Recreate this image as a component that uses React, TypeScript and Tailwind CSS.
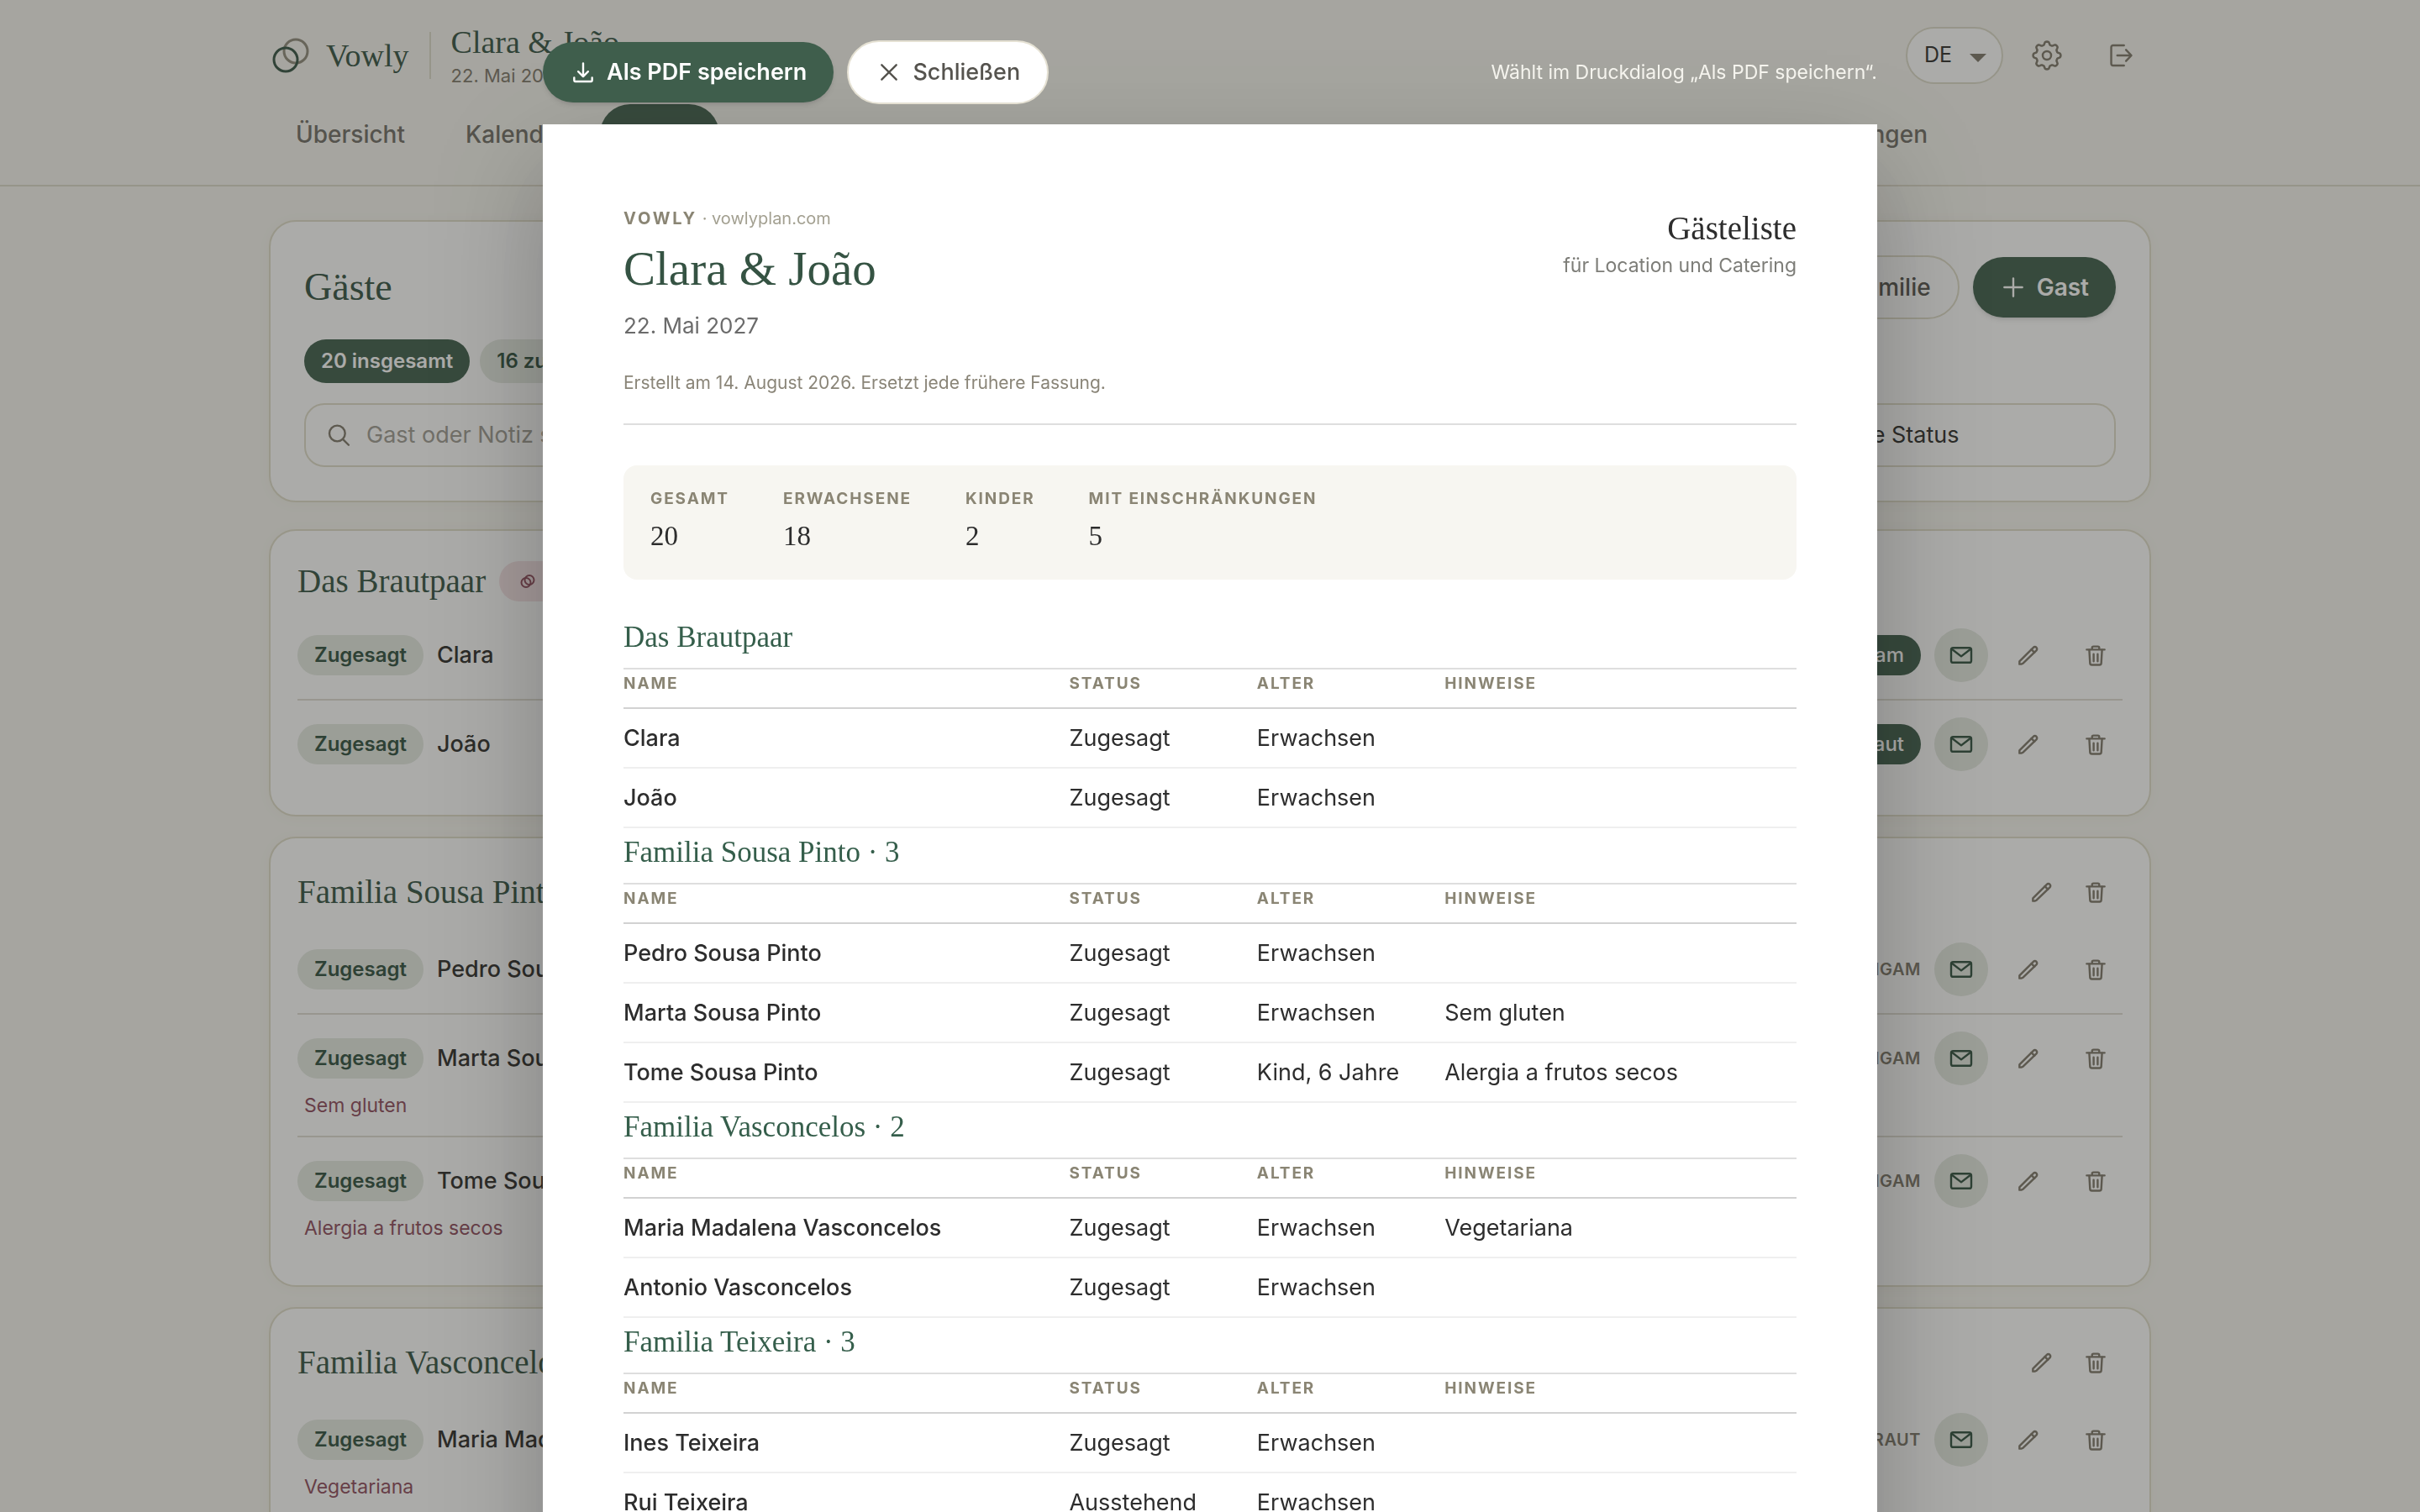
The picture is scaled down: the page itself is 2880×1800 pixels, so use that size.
import type { ReactNode } from 'react'

const serif = "font-['Liberation_Serif',serif]"

interface Guest {
  name: string;
  status: string;
  age: string;
  notes?: string;
}

interface Group {
  title: string;
  guests: Guest[];
}

const groups: Group[] = [
  {
    title: 'Das Brautpaar',
    guests: [
      { name: 'Clara', status: 'Zugesagt', age: 'Erwachsen' },
      { name: 'João', status: 'Zugesagt', age: 'Erwachsen' },
    ],
  },
  {
    title: 'Familia Sousa Pinto · 3',
    guests: [
      { name: 'Pedro Sousa Pinto', status: 'Zugesagt', age: 'Erwachsen' },
      { name: 'Marta Sousa Pinto', status: 'Zugesagt', age: 'Erwachsen', notes: 'Sem gluten' },
      { name: 'Tome Sousa Pinto', status: 'Zugesagt', age: 'Kind, 6 Jahre', notes: 'Alergia a frutos secos' },
    ],
  },
  {
    title: 'Familia Vasconcelos · 2',
    guests: [
      { name: 'Maria Madalena Vasconcelos', status: 'Zugesagt', age: 'Erwachsen', notes: 'Vegetariana' },
      { name: 'Antonio Vasconcelos', status: 'Zugesagt', age: 'Erwachsen' },
    ],
  },
  {
    title: 'Familia Teixeira · 3',
    guests: [
      { name: 'Ines Teixeira', status: 'Zugesagt', age: 'Erwachsen' },
      { name: 'Rui Teixeira', status: 'Ausstehend', age: 'Erwachsen' },
    ],
  },
]

const totals = [
  { label: 'Gesamt', value: 20 },
  { label: 'Erwachsene', value: 18 },
  { label: 'Kinder', value: 2 },
  { label: 'Mit Einschränkungen', value: 5 },
]

// Outline of the cog: eight soft teeth round a circle
const cogPath =
  Array.from({ length: 96 }, (_, i) => {
    const a = (i / 96) * Math.PI * 2
    const r = 14.6 + 1.9 * Math.tanh(1.8 * Math.cos(8 * a))
    return `${i ? 'L' : 'M'}${(20 + r * Math.sin(a)).toFixed(2)} ${(20 - r * Math.cos(a)).toFixed(2)}`
  }).join('') + 'Z'

function Icon({ children }: { children: ReactNode }) {
  return (
    <svg viewBox="0 0 24 24" className="size-8 shrink-0" fill="none" stroke="currentColor" strokeWidth="1.8" strokeLinecap="round" strokeLinejoin="round" aria-hidden="true">
      {children}
    </svg>
  )
}

function MailIcon() {
  return (
    <Icon>
      <rect x="3" y="5.4" width="18" height="13.2" rx="1.8" />
      <path d="M3.4 6.4 12 13l8.600-6.600" />
    </Icon>
  )
}

function PencilIcon() {
  return (
    <Icon>
      <path d="M4 20v-2.400L16.400 5.100a1.900 1.900 0 0 1 2.700 0 1.900 1.900 0 0 1 0 2.700L7.200 19.300 5.600 20z" />
      <path d="m14.700 6.900 2.700 2.700" />
    </Icon>
  )
}

function TrashIcon() {
  return (
    <Icon>
      <path d="M4 7h16M8.800 6.800V5.400a1.200 1.200 0 0 1 1.200-1.200h4a1.200 1.200 0 0 1 1.200 1.200v1.400" />
      <path d="m6.300 7.200.7 12a1.500 1.500 0 0 0 1.500 1.400h7a1.500 1.500 0 0 0 1.500-1.400l.7-12" />
      <path d="M10.200 11v6.400M13.800 11v6.400" />
    </Icon>
  )
}

function LogoutIcon() {
  return (
    <Icon>
      <path d="M14.800 3H5a1.600 1.600 0 0 0-1.600 1.600v14.800A1.600 1.600 0 0 0 5 21h9.800" />
      <path d="M8.800 12h12.400M16.600 7l4.800 5-4.800 5" />
    </Icon>
  )
}

function CogIcon() {
  return (
    <svg viewBox="0 0 40 40" className="size-10" fill="none" stroke="currentColor" strokeWidth="2.500" strokeLinejoin="round" aria-hidden="true">
      <path d={cogPath} />
      <circle cx="20" cy="20" r="5" />
    </svg>
  )
}

function SearchIcon() {
  return (
    <Icon>
      <circle cx="10" cy="10.500" r="7" />
      <path d="m15.200 15.800 5 5" />
    </Icon>
  )
}

function IconButton({ label, children, round }: { label: string; children: ReactNode; round?: boolean }) {
  return (
    <button
      aria-label={label}
      className={
        round
          ? 'flex size-16 items-center justify-center rounded-full bg-[#e4e9e1] text-[#2f4f3e]'
          : 'flex size-16 items-center justify-center rounded-full text-[#7d776a]'
      }
    >
      {children}
    </button>
  )
}

function Header() {
  return (
    <header className="border-b-2 border-[#dddaca]">
      <div className="mx-auto flex max-w-[2240px] flex-col gap-6 pt-8 pb-6">
        <div className="flex h-17 items-center gap-6">
          <a href="#" className="flex items-center gap-5">
            <svg viewBox="0 0 48 48" className="size-12" fill="none" strokeWidth="3" aria-hidden="true">
              <circle cx="32" cy="19" r="14" stroke="#8f8b7c" />
              <circle cx="20" cy="29" r="14" stroke="#355343" />
            </svg>
            <span className={`${serif} text-[38px] leading-10 text-[#355343]`}>Vowly</span>
          </a>
          <div className="h-14 w-0.5 bg-[#dddaca]" />
          <div className="pt-1">
            <p className={`${serif} text-[38px] leading-10 text-[#355343]`}>Clara &amp; João</p>
            <p className="mt-1 text-[22px] leading-8 text-[#7d776a]">22. Mai 2027</p>
          </div>
          <div className="ml-auto flex items-center gap-4">
            <div className="relative">
              <select aria-label="Sprache" className="h-17 w-[116px] appearance-none rounded-full border-2 border-[#dddaca] bg-white pl-5 text-[25px] text-[#2d2c2a]">
                <option>DE</option>
              </select>
              <svg viewBox="0 0 20 10" className="pointer-events-none absolute top-8 right-5 h-2.5 w-5 fill-[#7d776a]" aria-hidden="true">
                <path d="M0 0h20L10 10z" />
              </svg>
            </div>
            <button aria-label="Einstellungen" className="flex size-18 items-center justify-center text-[#7d776a]"><CogIcon /></button>
            <button aria-label="Abmelden" className="flex size-18 items-center justify-center text-[#7d776a]"><LogoutIcon /></button>
          </div>
        </div>
        <nav className="flex gap-2 pr-[234px] text-[28px] font-medium text-[#706d66]">
          <a href="#" className="flex h-18 items-center rounded-full px-8">Übersicht</a>
          <a href="#" className="flex h-18 items-center rounded-full px-8">Kalender</a>
          <a href="#" aria-current="page" className="flex h-18 items-center rounded-full bg-[#3f5e4c] px-8 text-white">Gäste</a>
          <a href="#" className="ml-auto flex h-18 items-center rounded-full px-8">Einstellungen</a>
        </nav>
      </div>
    </header>
  )
}

function Overview() {
  return (
    <section className="rounded-[32px] border-2 border-[#e0ddca] bg-white p-10 shadow-[0_2px_16px_rgba(90,85,50,0.04)]">
      <div className="flex h-[76px] items-center gap-4">
        <h1 className={`${serif} mr-auto text-[46px] leading-14 text-[#355343]`}>Gäste</h1>
        <button className="flex h-[76px] items-center gap-3 rounded-full border-2 border-[#e0ddca] bg-white px-8 text-[28px] font-medium text-[#55534e]">
          <Icon><path d="M12 4v16M4 12h16" /></Icon>
          Familie
        </button>
        <button className="flex h-18 items-center gap-3 rounded-full bg-[#3f5e4c] px-8 text-[28px] font-semibold text-white shadow-md">
          <Icon><path d="M12 4v16M4 12h16" /></Icon>
          Gast
        </button>
      </div>
      <div className="mt-6 flex gap-3 text-[24px] font-semibold">
        <span className="flex h-13 items-center rounded-full bg-[#3f5e4c] px-5 text-white">20 insgesamt</span>
        <span className="flex h-13 items-center rounded-full bg-[#e4e9e1] px-5 text-[#2f4f3e]">16 zugesagt</span>
      </div>
      <div className="mt-6 flex gap-6">
        <label className="flex h-[76px] flex-1 items-center gap-4 rounded-[24px] border-2 border-[#e0ddca] bg-white px-6 text-[#7d776a]">
          <SearchIcon />
          <input type="search" aria-label="Suche" placeholder="Gast oder Notiz suchen" className="w-full bg-transparent text-[27px] outline-none placeholder:text-[#9e9b93]" />
        </label>
        <select aria-label="Status" className="h-[76px] w-[352px] appearance-none rounded-[24px] border-2 border-[#e0ddca] bg-white px-7 text-[27px] text-[#2d2c2a]">
          <option>Alle Status</option>
        </select>
      </div>
    </section>
  )
}

function GroupCard({ title, badge, actions, children }: { title: string; badge?: ReactNode; actions?: boolean; children: ReactNode }) {
  return (
    <section className="rounded-[32px] border-2 border-[#e0ddca] bg-white p-8 shadow-[0_2px_16px_rgba(90,85,50,0.04)]">
      <div className="mb-2 flex min-h-14 items-center">
        <h2 className={`${serif} mr-4 text-[39px] leading-12 text-[#355343]`}>{title}</h2>
        {badge}
        {actions && (
          <div className="ml-auto flex">
            <IconButton label="Familie bearbeiten"><PencilIcon /></IconButton>
            <IconButton label="Familie löschen"><TrashIcon /></IconButton>
          </div>
        )}
      </div>
      <ul className="divide-y-2 divide-[#e0ddd4]">{children}</ul>
    </section>
  )
}

function GuestRow({ name, side, note, couple }: { name: string; side: string; note?: string; couple?: boolean }) {
  return (
    <li className="py-5">
      <div className="flex items-center gap-4">
        <span className="flex h-12 items-center rounded-full bg-[#e4e9e1] px-5 text-[24px] font-semibold text-[#2f4f3e]">Zugesagt</span>
        <span className="text-[27px] font-medium text-[#2d2c2a]">{name}</span>
        {couple ? (
          <span className="ml-auto flex h-12 items-center rounded-full bg-[#3f5e4c] px-5 text-[24px] font-medium text-white">{side}</span>
        ) : (
          <span className="ml-auto text-[20px] font-semibold tracking-wide text-[#7d776a] uppercase">{side}</span>
        )}
        <IconButton label="Einladung" round><MailIcon /></IconButton>
        <IconButton label="Bearbeiten"><PencilIcon /></IconButton>
        <IconButton label="Löschen"><TrashIcon /></IconButton>
      </div>
      {note && <p className="mt-2 pl-2 text-[23px] leading-8 text-[#8e4a5c]">{note}</p>}
    </li>
  )
}

function SheetTable({ title, guests }: Group) {
  return (
    <section>
      <h3 className={`${serif} flex h-[67px] items-center border-b-2 border-[#dedede] pb-2 text-[35px] leading-10 text-[#355e4b]`}>{title}</h3>
      <table className="w-full table-fixed text-left">
        <thead>
          <tr className="h-[46px] border-b-2 border-[#d2d2d2] text-[19px] leading-6 text-[#8a8574] uppercase">
            <th className="w-[38%] pb-3 font-bold tracking-widest">Name</th>
            <th className="w-[16%] pb-3 font-bold tracking-widest">Status</th>
            <th className="w-[16%] pb-3 font-bold tracking-widest">Alter</th>
            <th className="w-[30%] pb-3 font-bold tracking-widest">Hinweise</th>
          </tr>
        </thead>
        <tbody>
          {guests.map((g) => (
            <tr key={g.name} className="h-[71px] border-b-2 border-[#efefef] text-[27px] leading-10 text-[#2d2d2d]">
              <td className="font-medium">{g.name}</td>
              <td>{g.status}</td>
              <td>{g.age}</td>
              <td>{g.notes}</td>
            </tr>
          ))}
        </tbody>
      </table>
    </section>
  )
}

function PrintDialog() {
  return (
    <div role="dialog" aria-label="Gästeliste" className="fixed inset-0 overflow-y-auto bg-[#2e2c28]/40 pt-12 [scrollbar-width:none]">
      <div className="mx-auto w-full max-w-[1588px]">
        <div className="flex items-center gap-4">
          <button className="flex h-18 items-center gap-3 rounded-full bg-[#3f5e4c] px-8 text-[27px] font-semibold text-white shadow-md">
            <Icon>
              <path d="M12 4v11.600M7.600 11.400l4.400 4.400 4.400-4.400" />
              <path d="M4 16.800v2.400a1 1 0 0 0 1 1h14a1 1 0 0 0 1-1v-2.400" />
            </Icon>
            Als PDF speichern
          </button>
          <button className="flex h-[76px] items-center gap-3 rounded-full border-2 border-[#e5e1d3] bg-white px-8 text-[27px] font-medium text-[#55534e]">
            <Icon><path d="m5.500 5.500 13 13M18.500 5.500l-13 13" /></Icon>
            Schließen
          </button>
          <p className="ml-auto text-[23px] text-[#f5f4ee]">Wählt im Druckdialog „Als PDF speichern“.</p>
        </div>
        <article className="mt-6 bg-white px-24 pt-24 pb-24 shadow-[0_48px_120px_rgba(0,0,0,0.25)]">
          <div className="flex justify-between border-b-2 border-[#dedede] pb-8">
            <div>
              <p className="text-[20px] leading-8 text-[#a3a091]">
                <span className="font-bold tracking-[0.14em] text-[#8a8574]">VOWLY</span> · vowlyplan.com
              </p>
              <h1 className={`${serif} text-[57px] leading-[88px] text-[#355343]`}>Clara &amp; João</h1>
              <p className="mt-1 text-[26px] leading-10 text-[#6b6b6b]">22. Mai 2027</p>
              <p className="mt-8 text-[21px] leading-8 text-[#8a8578]">Erstellt am 14. August 2026. Ersetzt jede frühere Fassung.</p>
            </div>
            <div className="text-right">
              <p className={`${serif} text-[39px] leading-14 text-[#2d2d2d]`}>Gästeliste</p>
              <p className="text-[23px] leading-8 text-[#7d7d78]">für Location und Catering</p>
            </div>
          </div>
          <dl className="mt-12 mb-10 flex gap-16 rounded-2xl bg-[#f7f6f1] px-8 py-6">
            {totals.map((t) => (
              <div key={t.label}>
                <dt className="text-[19px] leading-8 font-bold tracking-widest text-[#8a8574] uppercase">{t.label}</dt>
                <dd className={`${serif} text-[33px] leading-14 text-[#2d2d2d]`}>{t.value}</dd>
              </div>
            ))}
          </dl>
          {groups.map((g) => (
            <SheetTable key={g.title} {...g} />
          ))}
        </article>
      </div>
    </div>
  )
}

export default function App() {
  return (
    <div className="h-screen overflow-hidden bg-[#f7f6f0] font-[Inter,sans-serif]">
      <Header />
      <main className="mx-auto max-w-[2240px] pt-10">
        <Overview />
        <div className="mt-8 flex flex-col gap-6">
          <GroupCard
            title="Das Brautpaar"
            badge={
              <span className="flex h-12 items-center gap-3 rounded-full bg-[#f4e2e5] px-6 text-[24px] text-[#8e4a5c]">
                <svg viewBox="0 0 20 20" className="size-5" fill="none" stroke="currentColor" strokeWidth="2" aria-hidden="true">
                  <circle cx="8" cy="11.500" r="5.500" />
                  <circle cx="12" cy="8.500" r="5.500" />
                </svg>
                Brautpaar
              </span>
            }
          >
            <GuestRow name="Clara" side="Bräutigam" couple />
            <GuestRow name="João" side="Braut" couple />
          </GroupCard>
          <GroupCard title="Familia Sousa Pinto" actions>
            <GuestRow name="Pedro Sousa Pinto" side="Bräutigam" />
            <GuestRow name="Marta Sousa Pinto" side="Bräutigam" note="Sem gluten" />
            <GuestRow name="Tome Sousa Pinto" side="Bräutigam" note="Alergia a frutos secos" />
          </GroupCard>
          <GroupCard title="Familia Vasconcelos" actions>
            <GuestRow name="Maria Madalena Vasconcelos" side="Braut" note="Vegetariana" />
            <GuestRow name="Antonio Vasconcelos" side="Braut" />
          </GroupCard>
        </div>
      </main>
      <PrintDialog />
    </div>
  )
}
